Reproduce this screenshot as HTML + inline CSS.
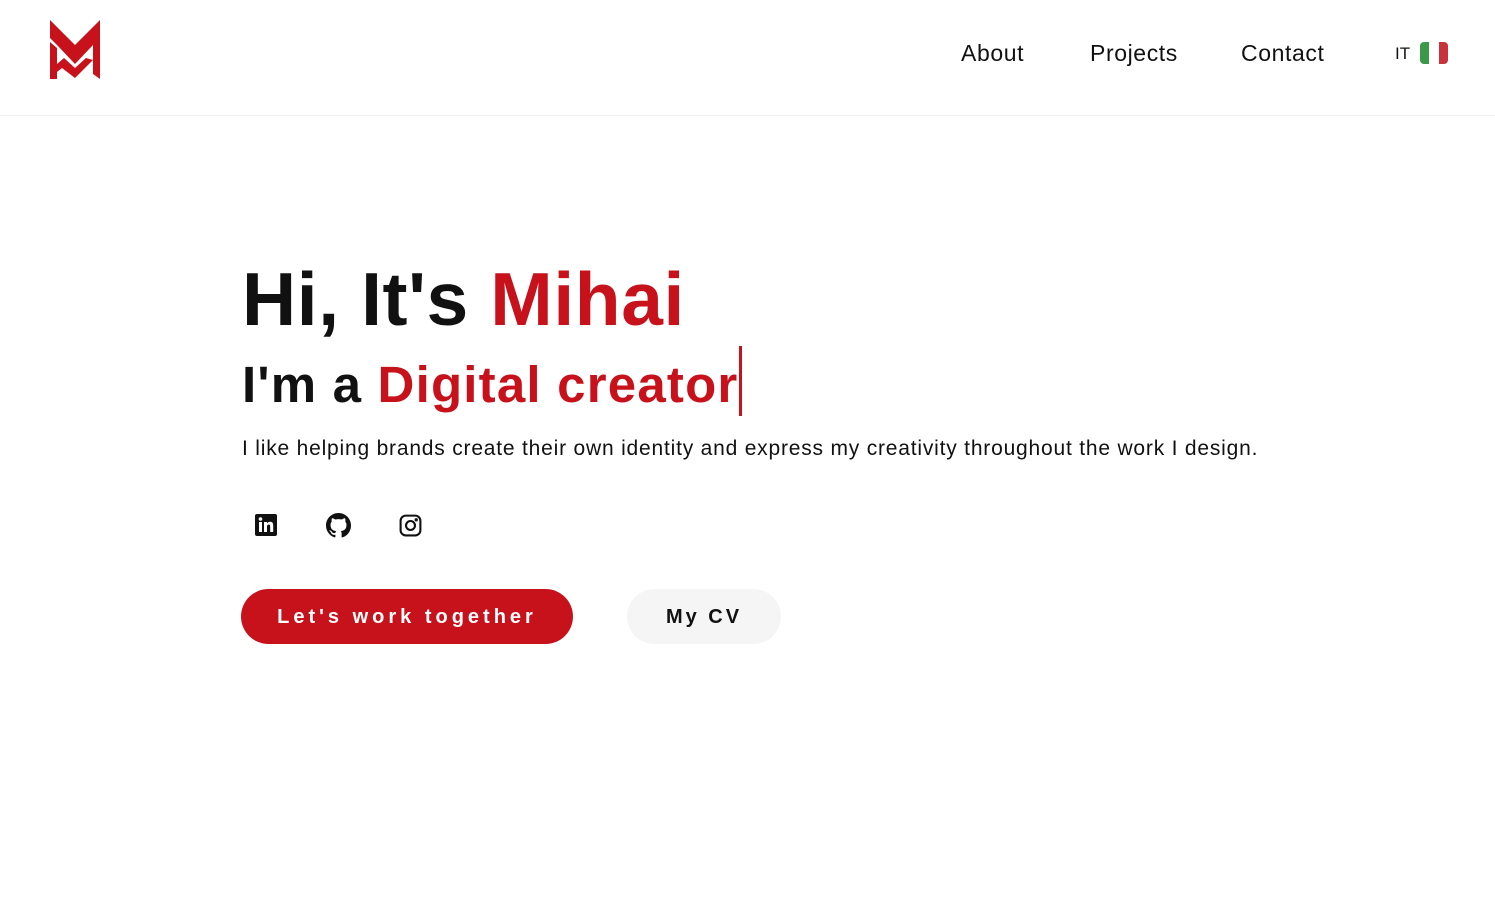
<!DOCTYPE html>
<html><head><meta charset="utf-8"><style>
*{margin:0;padding:0;box-sizing:border-box}
body{width:1495px;height:899px;background:#fff;font-family:"Liberation Sans",sans-serif;color:#111;position:relative;overflow:hidden}
.hdr{position:absolute;left:0;top:0;width:1495px;height:116px;border-bottom:1px solid #f0f0f0}
.nav{position:absolute;top:40px;font-size:23px;color:#111;letter-spacing:0.6px}
.red{color:#c8121b}
h1{position:absolute;left:242px;top:256px;font-size:75px;font-weight:bold;letter-spacing:0.6px;white-space:nowrap}
h2{position:absolute;left:242px;top:346px;font-size:51px;font-weight:bold;letter-spacing:1.2px;white-space:nowrap}
.cur{display:inline-block;width:3px;height:70px;background:#c8121b;vertical-align:-14px;margin-left:1px}
p{position:absolute;left:242px;top:437px;font-size:21px;letter-spacing:0.8px;white-space:nowrap}
.btn{position:absolute;top:589px;height:55px;padding-top:2px;border-radius:28px;font-size:20px;font-weight:bold;letter-spacing:3px;display:flex;align-items:center;justify-content:center}
</style></head><body>
<div class="hdr">
<svg style="position:absolute;left:50px;top:20px" width="50" height="59" viewBox="0 0 50 59">
<polygon fill="#c8121b" points="0,0 25,25 50,0 50,59 43,54 43,25 25,44 7,25 0,18"/>
<polygon fill="#c8121b" points="0,22 7,28 7,44 14,38 25,48 36,38 43,40 25,58 12,48 7,52 7,59 0,59"/>
</svg>
<div class="nav" style="left:961px">About</div>
<div class="nav" style="left:1090px">Projects</div>
<div class="nav" style="left:1241px">Contact</div>
<div style="position:absolute;left:1395px;top:44px;font-size:17px">IT</div>
<div style="position:absolute;left:1420px;top:42px;width:28px;height:22px;border-radius:4px;overflow:hidden;display:flex"><div style="flex:1;background:#3a9a4a"></div><div style="flex:1;background:#fff"></div><div style="flex:1;background:#c8333b"></div></div>
</div>
<h1>Hi, It's <span class="red">Mihai</span></h1>
<h2>I'm a <span class="red">Digital creator</span><span class="cur"></span></h2>
<p>I like helping brands create their own identity and express my creativity throughout the work I design.</p>
<svg style="position:absolute;left:255px;top:514px" width="22" height="22" viewBox="0 0 22 22"><rect width="22" height="22" rx="2" fill="#111"/><rect x="4" y="8" width="3" height="10" fill="#fff"/><circle cx="5.5" cy="5" r="1.8" fill="#fff"/><path d="M9 8h3v1.5c.8-1.3 2-1.7 3.2-1.7 2.3 0 3 1.5 3 3.8V18h-3v-5.5c0-1.3-.4-2-1.4-2s-1.8.7-1.8 2V18H9z" fill="#fff"/></svg>
<svg style="position:absolute;left:326px;top:513px" width="25" height="25" viewBox="0 0 16 16"><path fill="#111" d="M8 0C3.580 0 0 3.58 0 8c0 3.54 2.29 6.53 5.47 7.59.4.07.55-.17.55-.38v-1.330c-2.23.48-2.7-1.07-2.7-1.07-.36-.92-.89-1.17-.89-1.17-.73-.5.06-.49.06-.49.8.06 1.23.83 1.23.83.71 1.22 1.87.87 2.330.66.07-.52.28-.87.5-1.07-1.78-.2-3.64-.89-3.64-3.95 0-.87.31-1.59.82-2.15-.08-.2-.36-1.02.08-2.12 0 0 .67-.21 2.2.82a7.6 7.6 0 014 0c1.53-1.04 2.2-.82 2.2-.82.44 1.1.16 1.92.08 2.12.51.56.82 1.27.82 2.15 0 3.07-1.87 3.75-3.65 3.95.29.25.54.73.54 1.48v2.2c0 .21.15.46.55.38A8.01 8.01 0 0016 8c0-4.42-3.58-8-8-8z"/></svg>
<svg style="position:absolute;left:398px;top:513px" width="25" height="25" viewBox="0 0 24 24" fill="none" stroke="#111" stroke-width="2"><rect x="2.5" y="2.5" width="19" height="19" rx="5"/><circle cx="12" cy="12" r="4.3"/><circle cx="17.5" cy="6.5" r="0.6" fill="#111"/></svg>
<div class="btn" style="left:241px;width:332px;background:#c8121b;color:#fff;letter-spacing:4px">Let's work together</div>
<div class="btn" style="left:627px;width:154px;background:#f5f5f5;color:#111">My CV</div>
</body></html>
